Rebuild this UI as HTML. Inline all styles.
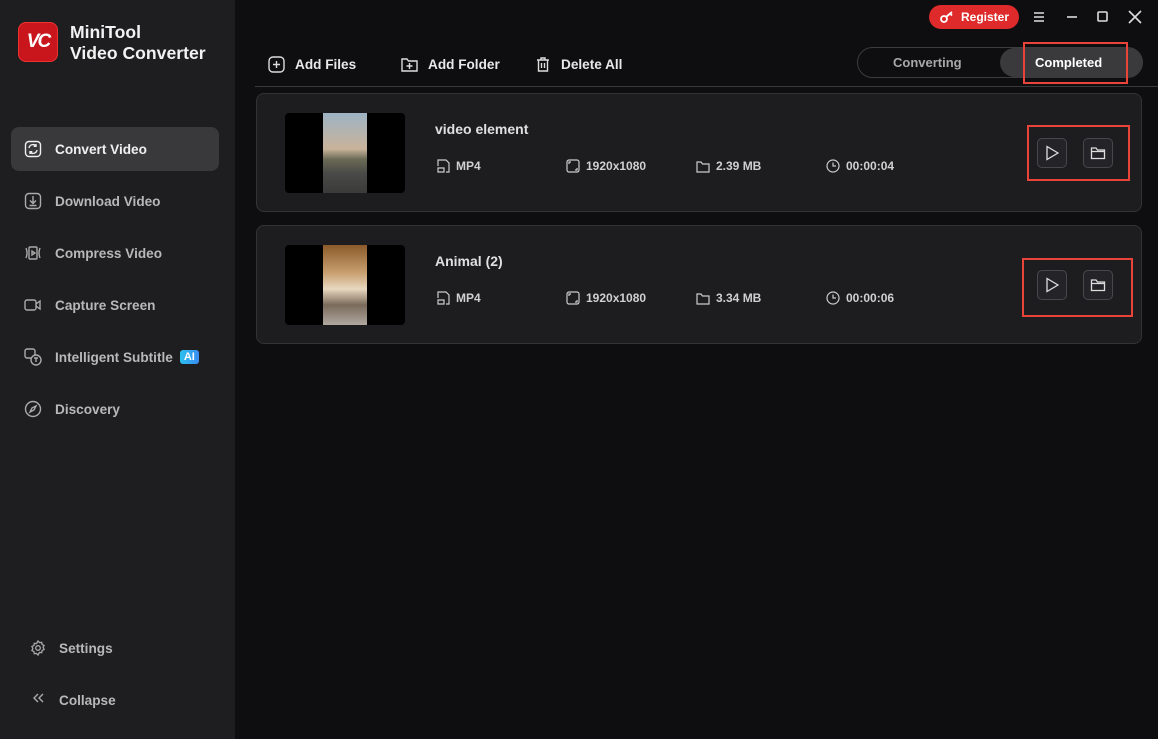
<!DOCTYPE html>
<html><head><meta charset="utf-8"><style>
*{margin:0;padding:0;box-sizing:border-box}
body{width:1158px;height:739px;background:#0e0e10;font-family:"Liberation Sans",sans-serif;position:relative;overflow:hidden;color:#e6e6e6}
.side{position:absolute;left:0;top:0;width:235px;height:739px;background:#1e1e20}
.abs{position:absolute}
.logo{left:18px;top:22px;width:40px;height:40px;border-radius:8px;background:#c8161c;border:1px solid #e33;color:#fff;font-weight:bold;font-style:italic;font-size:19px;text-align:center;line-height:38px;letter-spacing:-2px}
.brand{left:70px;top:22px;font-size:17.6px;font-weight:bold;color:#f2f2f2;line-height:21px}
.nav{position:absolute;left:11px;width:208px;height:44px;font-size:13.6px;color:#b8b8b8;display:flex;align-items:center;padding-left:13px;font-weight:bold}
.nav svg{margin-right:13px}
.nav.act{background:#39393c;border-radius:8px;color:#f0f0f0}
.ai{display:inline-block;background:linear-gradient(90deg,#2bc0f0,#3a8cf0);color:#fff;font-size:11px;border-radius:3px;padding:1px 4px;margin-left:7px}
.tb{position:absolute;top:56px;font-size:13.6px;font-weight:bold;color:#e8e8e8;display:flex;align-items:center}
.tb svg{margin-right:10px}
.line{left:255px;top:86px;width:903px;height:1px;background:#3a3a3c}
.card{position:absolute;left:256px;width:886px;height:119px;background:#1d1d20;border:1px solid #333336;border-radius:8px}
.thumb{position:absolute;left:28px;top:19px;width:120px;height:80px;background:#000;border-radius:4px;overflow:hidden}
.title{position:absolute;left:178px;font-size:14px;font-weight:bold;color:#e0e0e0}
.meta{position:absolute;font-size:12px;font-weight:bold;color:#d0d0d0;display:flex;align-items:center}
.meta svg{margin-right:6px}
.btn{position:absolute;width:30px;height:30px;border:1px solid #48484c;border-radius:5px;background:#242428;display:flex;align-items:center;justify-content:center}
.red{position:absolute;border:2px solid #e8443a}
</style></head><body>
<div class="side">
<div class="abs logo">VC</div>
<div class="abs brand">MiniTool<br>Video Converter</div>
<div class="nav act" style="top:127px"><svg width="18" height="18" viewBox="0 0 18 18" fill="none" stroke="#eee" stroke-width="1.4"><rect x="1.5" y="1.5" width="15" height="15" rx="3.5"/><path d="M5 8a4 4 0 0 1 7-2M13 10a4 4 0 0 1-7 2M12 4v2.3h-2.3M6 14v-2.3h2.3"/></svg>Convert Video</div>
<div class="nav" style="top:179px"><svg width="18" height="18" viewBox="0 0 18 18" fill="none" stroke="#aaa" stroke-width="1.4"><rect x="1.5" y="1.5" width="15" height="15" rx="3.5"/><path d="M9 4v7M6 8.5l3 3 3-3M5.5 13.5h7"/></svg>Download Video</div>
<div class="nav" style="top:231px"><svg width="18" height="18" viewBox="0 0 18 18" fill="none" stroke="#aaa" stroke-width="1.4"><rect x="5" y="3" width="8" height="12" rx="1"/><path d="M8 7v4l3-2zM2 4q2 5 0 10M16 4q-2 5 0 10"/></svg>Compress Video</div>
<div class="nav" style="top:283px"><svg width="18" height="18" viewBox="0 0 18 18" fill="none" stroke="#aaa" stroke-width="1.4"><rect x="1" y="4" width="11" height="10" rx="2"/><path d="M12 8l4-3v8l-4-3"/></svg>Capture Screen</div>
<div class="nav" style="top:335px"><svg width="18" height="18" viewBox="0 0 18 18" fill="none" stroke="#aaa" stroke-width="1.4"><rect x="1" y="1" width="10" height="9" rx="2"/><circle cx="12" cy="12" r="5" fill="#1e1e20"/><path d="M10 10h4M12 10v4"/></svg>Intelligent Subtitle<span class="ai">AI</span></div>
<div class="nav" style="top:387px"><svg width="18" height="18" viewBox="0 0 18 18" fill="none" stroke="#aaa" stroke-width="1.4"><circle cx="9" cy="9" r="7.5"/><path d="M12 6l-2 4-4 2 2-4z"/></svg>Discovery</div>
<div class="nav" style="top:626px;padding-left:19px"><svg width="16" height="16" viewBox="0 0 16 16" fill="none" stroke="#aaa" stroke-width="1.3"><circle cx="8" cy="8" r="2.3"/><path d="M8 1l1.5 1.6 2.2-.3.4 2.2 2 1-1 2 1 2-2 1-.4 2.2-2.2-.3L8 15l-1.5-1.6-2.2.3-.4-2.2-2-1 1-2-1-2 2-1 .4-2.2 2.2.3z"/></svg>Settings</div>
<div class="nav" style="top:678px;padding-left:19px"><svg width="16" height="16" viewBox="0 0 16 16" fill="none" stroke="#aaa" stroke-width="1.4"><path d="M8 4l-4 4 4 4M13 4l-4 4 4 4" transform="translate(0,-2)"/></svg>Collapse</div>
</div>

<div class="abs" style="left:929px;top:5px;width:90px;height:24px;background:#de2a2a;border-radius:12px;color:#fff;font-size:12px;font-weight:bold;line-height:24px;padding-left:32px"><svg class="abs" style="left:11px;top:5px" width="16" height="14" viewBox="0 0 16 14" fill="none" stroke="#fff" stroke-width="1.8"><circle cx="4" cy="9" r="3"/><path d="M6 7l6-5M10 3.5l2 2"/></svg>Register</div>
<svg class="abs" style="left:1033px;top:11px" width="12" height="12" stroke="#ddd" stroke-width="1.6"><path d="M1 2h10M1 6h10M1 10h10"/></svg>
<svg class="abs" style="left:1066px;top:11px" width="12" height="12" stroke="#ddd" stroke-width="1.6"><path d="M1 6h10"/></svg>
<svg class="abs" style="left:1097px;top:11px" width="12" height="12" fill="none" stroke="#ddd" stroke-width="1.6"><rect x="1" y="1" width="9" height="9" rx="1"/></svg>
<svg class="abs" style="left:1128px;top:10px" width="14" height="14" stroke="#ddd" stroke-width="1.6"><path d="M1 1l12 12M13 1L1 13"/></svg>

<div class="tb" style="left:268px"><svg width="17" height="17" viewBox="0 0 17 17" fill="none" stroke="#ddd" stroke-width="1.4"><rect x="1" y="1" width="15" height="15" rx="4"/><path d="M8.5 5v7M5 8.5h7"/></svg>Add Files</div>
<div class="tb" style="left:401px"><svg width="17" height="17" viewBox="0 0 17 17" fill="none" stroke="#ddd" stroke-width="1.4"><path d="M1 3h5l1.5 2H16v10H1z"/><path d="M8.5 7v6M5.5 10h6"/></svg>Add Folder</div>
<div class="tb" style="left:535px"><svg width="16" height="17" viewBox="0 0 16 17" fill="none" stroke="#ddd" stroke-width="1.4"><path d="M2 4h12M6 4V2h4v2M3.5 4v11h9V4M6.5 7v5M9.5 7v5"/></svg>Delete All</div>

<div class="abs" style="left:857px;top:47px;width:286px;height:31px;border:1px solid #3c3c3f;border-radius:16px"></div>
<div class="abs" style="left:1000px;top:48px;width:143px;height:29px;background:#3a3a3d;border-radius:15px"></div>
<div class="abs" style="left:893px;top:55px;font-size:13px;font-weight:bold;color:#a8a8a8">Converting</div>
<div class="abs" style="left:1035px;top:55px;font-size:13px;font-weight:bold;color:#fff">Completed</div>
<div class="red" style="left:1023px;top:42px;width:105px;height:42px"></div>
<div class="abs line"></div>

<div class="card" style="top:93px">
<div class="thumb"><div style="position:absolute;left:38px;top:0;width:44px;height:80px;background:linear-gradient(180deg,#9db3c4 0%,#c9b39a 45%,#6a6a55 58%,#4a4a48 75%,#3a3a3a 100%)"></div></div>
<div class="title" style="top:27px">video element</div>
</div>
<div class="card" style="top:225px">
<div class="thumb"><div style="position:absolute;left:38px;top:0;width:44px;height:80px;background:linear-gradient(180deg,#8a5a2a 0%,#c9a070 35%,#e8d8c0 55%,#7a6a5a 75%,#b0a8a0 100%)"></div></div>
<div class="title" style="top:27px">Animal (2)</div>
</div>

<div class="meta" style="left:437px;top:159px"><svg width="13" height="14" viewBox="0 0 13 14" fill="none" stroke="#ccc" stroke-width="1.2"><path d="M9 13h3V4L9 1H1v6M1 9h6v4H1z"/></svg>MP4</div>
<div class="meta" style="left:566px;top:159px"><svg width="14" height="14" viewBox="0 0 14 14" fill="none" stroke="#ccc" stroke-width="1.2"><rect x="1" y="1" width="12" height="12" rx="2"/><path d="M3 5V3h2M11 9v2H9"/></svg>1920x1080</div>
<div class="meta" style="left:696px;top:159px"><svg width="14" height="13" viewBox="0 0 14 13" fill="none" stroke="#ccc" stroke-width="1.2"><path d="M1 2h4l1.5 2H13v8H1z"/></svg>2.39 MB</div>
<div class="meta" style="left:826px;top:159px"><svg width="14" height="14" viewBox="0 0 14 14" fill="none" stroke="#ccc" stroke-width="1.2"><circle cx="7" cy="7" r="6"/><path d="M7 3.5V7h3"/></svg>00:00:04</div>
<div class="meta" style="left:437px;top:291px"><svg width="13" height="14" viewBox="0 0 13 14" fill="none" stroke="#ccc" stroke-width="1.2"><path d="M9 13h3V4L9 1H1v6M1 9h6v4H1z"/></svg>MP4</div>
<div class="meta" style="left:566px;top:291px"><svg width="14" height="14" viewBox="0 0 14 14" fill="none" stroke="#ccc" stroke-width="1.2"><rect x="1" y="1" width="12" height="12" rx="2"/><path d="M3 5V3h2M11 9v2H9"/></svg>1920x1080</div>
<div class="meta" style="left:696px;top:291px"><svg width="14" height="13" viewBox="0 0 14 13" fill="none" stroke="#ccc" stroke-width="1.2"><path d="M1 2h4l1.5 2H13v8H1z"/></svg>3.34 MB</div>
<div class="meta" style="left:826px;top:291px"><svg width="14" height="14" viewBox="0 0 14 14" fill="none" stroke="#ccc" stroke-width="1.2"><circle cx="7" cy="7" r="6"/><path d="M7 3.5V7h3"/></svg>00:00:06</div>

<div class="btn" style="left:1037px;top:138px"><svg width="14" height="16" fill="none" stroke="#ddd" stroke-width="1.3"><path d="M2 1.5v13l11-6.5z"/></svg></div>
<div class="btn" style="left:1083px;top:138px"><svg width="16" height="14" fill="none" stroke="#ddd" stroke-width="1.3"><path d="M1.5 2h4.5l1.5 2h7v8.5h-13z M1.5 5.5h13"/></svg></div>
<div class="red" style="left:1027px;top:125px;width:103px;height:56px"></div>
<div class="btn" style="left:1037px;top:270px"><svg width="14" height="16" fill="none" stroke="#ddd" stroke-width="1.3"><path d="M2 1.5v13l11-6.5z"/></svg></div>
<div class="btn" style="left:1083px;top:270px"><svg width="16" height="14" fill="none" stroke="#ddd" stroke-width="1.3"><path d="M1.5 2h4.5l1.5 2h7v8.5h-13z M1.5 5.5h13"/></svg></div>
<div class="red" style="left:1022px;top:258px;width:111px;height:59px"></div>
</body></html>
